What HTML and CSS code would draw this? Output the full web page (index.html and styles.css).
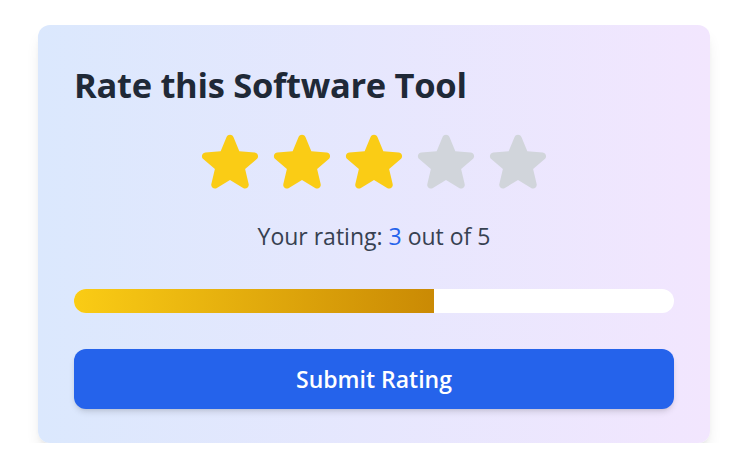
FILE: index.html
```html
<!DOCTYPE html>
<html lang="en">
<head>
<meta charset="utf-8">
<title>Rate this Software Tool</title>
<link rel="stylesheet" href="styles.css">
</head>
<body>
<main class="card">
  <h1 class="title">Rate this Software Tool</h1>
  <div class="stars">
    <svg class="star on" viewBox="0 0 24 24"><path d="M10.788 3.21c.448-1.077 1.976-1.077 2.424 0l2.082 5.006 5.404.434c1.164.093 1.636 1.545.749 2.305l-4.117 3.527 1.257 5.273c.271 1.136-.964 2.033-1.96 1.425L12 18.354 7.373 21.18c-.996.608-2.231-.29-1.96-1.425l1.257-5.273-4.117-3.527c-.887-.76-.415-2.212.749-2.305l5.404-.434 2.082-5.005Z"/></svg>
    <svg class="star on" viewBox="0 0 24 24"><path d="M10.788 3.21c.448-1.077 1.976-1.077 2.424 0l2.082 5.006 5.404.434c1.164.093 1.636 1.545.749 2.305l-4.117 3.527 1.257 5.273c.271 1.136-.964 2.033-1.96 1.425L12 18.354 7.373 21.18c-.996.608-2.231-.29-1.96-1.425l1.257-5.273-4.117-3.527c-.887-.76-.415-2.212.749-2.305l5.404-.434 2.082-5.005Z"/></svg>
    <svg class="star on" viewBox="0 0 24 24"><path d="M10.788 3.21c.448-1.077 1.976-1.077 2.424 0l2.082 5.006 5.404.434c1.164.093 1.636 1.545.749 2.305l-4.117 3.527 1.257 5.273c.271 1.136-.964 2.033-1.96 1.425L12 18.354 7.373 21.18c-.996.608-2.231-.29-1.96-1.425l1.257-5.273-4.117-3.527c-.887-.76-.415-2.212.749-2.305l5.404-.434 2.082-5.005Z"/></svg>
    <svg class="star" viewBox="0 0 24 24"><path d="M10.788 3.21c.448-1.077 1.976-1.077 2.424 0l2.082 5.006 5.404.434c1.164.093 1.636 1.545.749 2.305l-4.117 3.527 1.257 5.273c.271 1.136-.964 2.033-1.96 1.425L12 18.354 7.373 21.18c-.996.608-2.231-.29-1.96-1.425l1.257-5.273-4.117-3.527c-.887-.76-.415-2.212.749-2.305l5.404-.434 2.082-5.005Z"/></svg>
    <svg class="star" viewBox="0 0 24 24"><path d="M10.788 3.21c.448-1.077 1.976-1.077 2.424 0l2.082 5.006 5.404.434c1.164.093 1.636 1.545.749 2.305l-4.117 3.527 1.257 5.273c.271 1.136-.964 2.033-1.96 1.425L12 18.354 7.373 21.18c-.996.608-2.231-.29-1.96-1.425l1.257-5.273-4.117-3.527c-.887-.76-.415-2.212.749-2.305l5.404-.434 2.082-5.005Z"/></svg>
  </div>
  <p class="rating">Your rating: <span class="value">3</span> out of 5</p>
  <div class="track"><div class="fill" style="width: 60%"></div></div>
  <button class="submit" type="button">Submit Rating</button>
</main>
</body>
</html>
```
FILE: styles.css
```css
* { box-sizing: border-box; }
html, body { margin: 0; padding: 0; background: #ffffff; }
body {
  font-family: "Open Sans", "Noto Sans", sans-serif;
  padding: 25px 0 0 38px;
}
.card {
  width: 672px;
  padding: 40px 36px 34px;
  border-radius: 12px;
  background: linear-gradient(to right, #dbe8fd, #f2e6fe);
  box-shadow: 0 10px 15px -3px rgba(0,0,0,0.10), 0 4px 6px -4px rgba(0,0,0,0.10);
  display: flex;
  flex-direction: column;
}
.title {
  margin: 0;
  font-size: 34.5px;
  line-height: 40px;
  font-weight: 700;
  color: #1f2937;
  letter-spacing: -0.3px;
}
.stars {
  margin-top: 23px;
  display: flex;
  justify-content: center;
  gap: 4px;
}
.star {
  width: 68px;
  height: 68px;
  fill: #d1d5db;
}
.star.on { fill: #facc15; }
.rating {
  margin: 24px 0 0;
  text-align: center;
  font-size: 23px;
  line-height: 32px;
  font-weight: 500;
  color: #374151;
}
.value { color: #2563eb; }
.track {
  margin-top: 37px;
  height: 24px;
  border-radius: 9999px;
  background: #ffffff;
  overflow: hidden;
}
.fill {
  height: 100%;
  background: linear-gradient(to right, #facc15, #ca8a04);
}
.submit {
  margin-top: 36px;
  height: 60px;
  border: 0;
  border-radius: 12px;
  background: #2563eb;
  color: #ffffff;
  font-family: inherit;
  font-size: 23px;
  font-weight: 600;
  box-shadow: 0 4px 6px -1px rgba(0,0,0,0.12), 0 2px 4px -2px rgba(0,0,0,0.1);
}
```
